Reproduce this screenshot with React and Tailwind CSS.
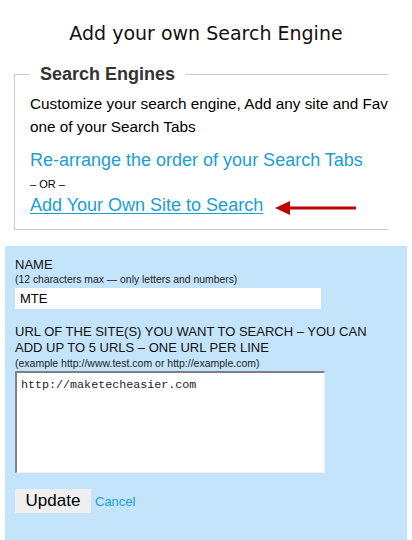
import React from "react";

const App = () => {
  return (
    <div className="w-[412px] h-[540px] bg-white overflow-hidden font-['Liberation_Sans',Arial,sans-serif] text-black">
      <h1 className="pt-[22px] h-[64px] text-center text-[19px] leading-[22px] font-['DejaVu_Sans',Verdana,sans-serif] text-[#111]">
        Add your own Search Engine
      </h1>

      <div className="w-[388px] overflow-hidden pl-[14px]">
        <fieldset className="w-[480px] h-[166px] border border-[#cccccc] pl-[15px]">
          <legend className="px-[10px] text-[18px] leading-[20px] font-bold text-[#333]">
            Search Engines
          </legend>
          <p className="mt-[8px] text-[15.3px] leading-[23px] whitespace-nowrap">
            Customize your search engine, Add any site and Favorites to
            <br />
            one of your Search Tabs
          </p>
          <a className="block mt-[12px] text-[18px] leading-[21px] text-[#1a9ed4]">
            Re-arrange the order of your Search Tabs
          </a>
          <div className="text-[11px] leading-[14px] mt-[6px]">– OR –</div>
          <div className="flex items-center mt-[4px]">
            <a className="text-[18px] leading-[21px] text-[#1a9ed4] underline underline-offset-2">
              Add Your Own Site to Search
            </a>
            <svg width="84" height="14" viewBox="0 0 84 14" className="ml-[12px] mt-[5px]">
              <line x1="12" y1="7" x2="81" y2="7" stroke="#c00000" strokeWidth="3" />
              <polygon points="0,7 15,0 15,14" fill="#c00000" />
            </svg>
          </div>
        </fieldset>
      </div>

      <div className="mx-[5px] mt-[16px] h-[291px] bg-[#c4e4fc] px-[10px] pt-[11px] border-b-[3px] border-[#e0e0e0] box-content">
        <div className="text-[13px] leading-[16px] text-[#111]">NAME</div>
        <div className="text-[10.4px] leading-[13px] text-[#222]">
          (12 characters max — only letters and numbers)
        </div>
        <div className="mt-[2px] w-[306px] h-[21px] bg-white pl-[5px] text-[13px] leading-[21px]">
          MTE
        </div>
        <div className="mt-[15px] text-[13px] leading-[16px] text-[#111] w-[380px]">
          URL OF THE SITE(S) YOU WANT TO SEARCH – YOU CAN ADD UP TO 5 URLS – ONE URL PER LINE
        </div>
        <div className="mt-[1px] text-[10.5px] leading-[13px] text-[#222]">
          (example http://www.test.com or http://example.com)
        </div>
        <div className="mt-[1px] w-[310px] h-[102px] bg-white border-t-2 border-l-2 border-t-[#808080] border-l-[#808080] border-r border-b border-r-[#eeeeee] border-b-[#eeeeee] pl-[4px] pt-[4px] font-['Liberation_Mono','Courier_New',monospace] text-[11.7px] leading-[16px] text-[#222]">
          http://maketecheasier.com
        </div>
        <div className="flex items-center mt-[16px]">
          <button className="w-[76px] h-[24px] bg-[#efefef] text-[17px] leading-[20px] text-black">
            Update
          </button>
          <a className="ml-[4px] mt-[2px] text-[13px] text-[#1a9ed4]">Cancel</a>
        </div>
      </div>
    </div>
  );
};

export default App;
